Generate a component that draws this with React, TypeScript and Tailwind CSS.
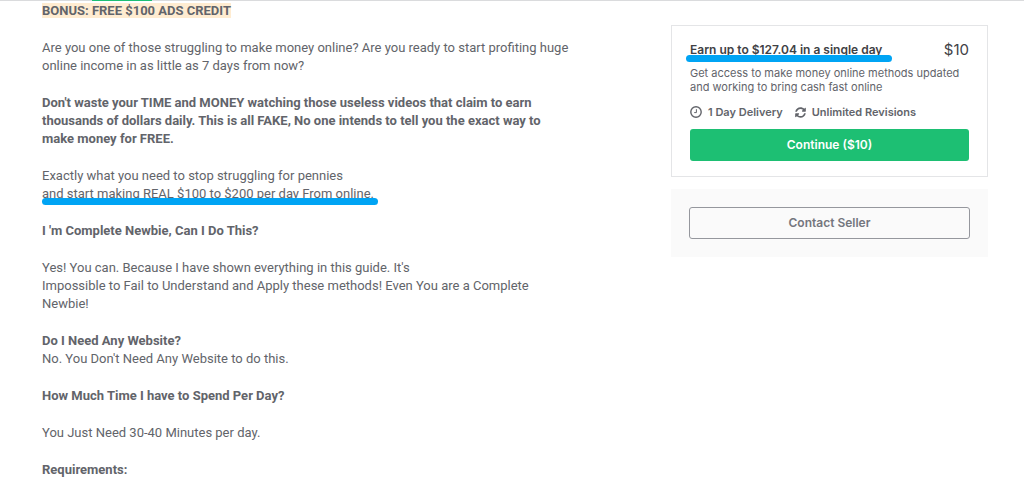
import type { ReactNode } from 'react';
import { FaSyncAlt } from 'react-icons/fa';

function Marked({ children, className }: { children: ReactNode; className: string }) {
  return (
    <span className="relative inline-block whitespace-nowrap">
      {children}
      <span aria-hidden="true" className={`absolute h-[7px] rounded-full bg-[#00a4f4] ${className}`} />
    </span>
  );
}

function ClockIcon() {
  return (
    <svg viewBox="0 0 12 12" className="size-3 shrink-0" fill="none" stroke="currentColor" aria-hidden="true">
      <circle cx="6" cy="6" r="5.2" strokeWidth="1.4" />
      <path d="M6.4 3.2V6.6H4.2" strokeWidth="1" />
    </svg>
  );
}

function Description() {
  return (
    <article className="flex w-[548px] shrink-0 flex-col gap-[19px] pt-px font-['Roboto',sans-serif] text-[13px] leading-[18px] whitespace-nowrap">
      <p className="font-bold">
        <mark className="bg-[#ffecd1] text-inherit">BONUS: FREE $100 ADS CREDIT</mark>
      </p>
      <p>
        Are you one of those struggling to make money online? Are you ready to start profiting huge
        <br />
        online income in as little as 7 days from now?
      </p>
      <p className="font-bold">
        Don't waste your TIME and MONEY watching those useless videos that claim to earn
        <br />
        thousands of dollars daily. This is all FAKE, No one intends to tell you the exact way to
        <br />
        make money for FREE.
      </p>
      <p>
        Exactly what you need to stop struggling for pennies
        <br />
        <Marked className="-right-1 left-0 top-[13px]">and start making REAL $100 to $200 per day From online.</Marked>
      </p>
      <h2 className="font-bold">I 'm Complete Newbie, Can I Do This?</h2>
      <p>
        Yes! You can. Because I have shown everything in this guide. It's
        <br />
        Impossible to Fail to Understand and Apply these methods! Even You are a Complete
        <br />
        Newbie!
      </p>
      <section>
        <h2 className="font-bold">Do I Need Any Website?</h2>
        <p>No. You Don't Need Any Website to do this.</p>
      </section>
      <h2 className="font-bold">How Much Time I have to Spend Per Day?</h2>
      <p>You Just Need 30-40 Minutes per day.</p>
      <h2 className="font-bold">Requirements:</h2>
    </article>
  );
}

function OrderPanel() {
  return (
    <aside className="mt-6 flex w-[317px] shrink-0 flex-col gap-3">
      <section className="border border-[#e4e5e7] px-[18px] pt-[14px] pb-[15px]">
        <header className="flex items-center justify-between leading-5">
          <h3 className="text-xs font-semibold text-[#404145]">
            <Marked className="-right-2.5 -left-1 top-[13px]">Earn up to $127.04 in a single day</Marked>
          </h3>
          <span className="text-[15px] text-[#404145]">$10</span>
        </header>
        <p className="mt-[6px] text-[11px] leading-[14px] whitespace-nowrap">
          Get access to make money online methods updated
          <br />
          and working to bring cash fast online
        </p>
        <ul className="mt-2 flex gap-3 text-[11px] leading-5 font-semibold">
          <li className="flex items-center gap-[6px]">
            <ClockIcon />1 Day Delivery
          </li>
          <li className="flex items-center gap-[6px]">
            <FaSyncAlt className="size-[11px]" aria-hidden="true" />
            Unlimited Revisions
          </li>
        </ul>
        <button type="button" className="mt-[7px] h-8 w-full rounded-[3px] bg-[#1dbf73] text-xs font-semibold text-white">
          Continue ($10)
        </button>
      </section>
      <section className="bg-[#fafafa] px-[18px] py-[18px]">
        <button type="button" className="h-8 w-full rounded-[3px] border border-[#95979d] text-xs font-semibold text-[#74767e]">
          Contact Seller
        </button>
      </section>
    </aside>
  );
}

export default function App() {
  return (
    <div className="bg-white font-['Inter',sans-serif] text-[#62646a]">
      <div className="h-px bg-[#dadbdd] pl-[92px]">
        <div className="h-px w-[60px] bg-[#1dbf73]" />
      </div>
      <main className="flex items-start justify-between pr-9 pl-[42px]">
        <Description />
        <OrderPanel />
      </main>
    </div>
  );
}
